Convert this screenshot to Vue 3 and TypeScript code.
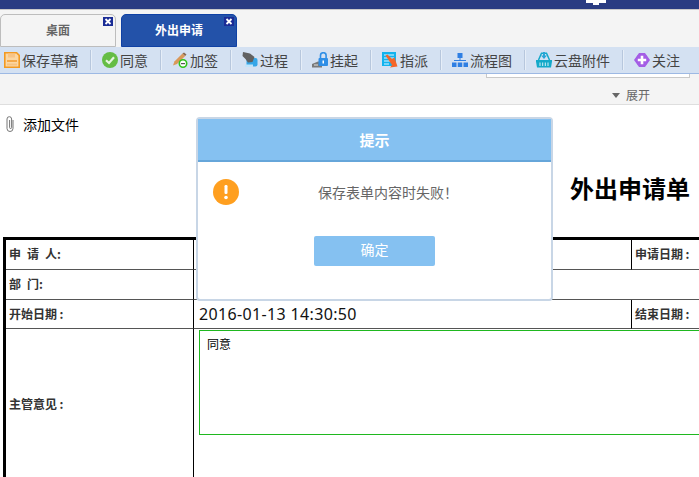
<template>
  <div class="page">
    <div class="topbar">
      <svg width="20" height="5" viewBox="0 0 20 5"><path d="M0 0h20v3h-7v2H7V3H0z" fill="#fff" /></svg>
    </div>

    <div class="tabs">
      <div v-for="tab in tabs" :key="tab.name" class="tab" :class="{ active: tab.active }">
        {{ tab.name }}
        <span class="tab-close">
          <svg width="10" height="9" viewBox="0 0 10 9">
            <path d="M2.5 2 7.5 7M7.5 2 2.5 7" stroke="#fff" stroke-width="1.8" fill="none" />
          </svg>
        </span>
      </div>
    </div>

    <div class="toolbar">
      <template v-for="(item, i) in tools" :key="item.name">
        <span v-if="i > 0" class="sep"></span>
        <div class="tool">
          <svg class="tool-icon" width="16" height="16" viewBox="0 0 16 16">
            <g v-if="item.icon === 'save'">
              <path d="M.8.8h11.8l2.600 2.600v11.800H.8z" fill="#fbd7a4" stroke="#f39a22" stroke-width="1.600" />
              <rect x="4" y="1.500" width="7" height="4" fill="#f8c486" />
              <rect x="3" y="8" width="10" height="2" fill="#f5a94a" />
              <rect x="3" y="11.500" width="10" height="2" fill="#f7c381" />
            </g>
            <g v-else-if="item.icon === 'ok'">
              <circle cx="8" cy="8" r="8" fill="#65bd45" />
              <path d="M4 8.200 7 11 12 5.200" stroke="#e6f5df" stroke-width="2.200" fill="none" />
            </g>
            <g v-else-if="item.icon === 'sign'">
              <path d="M1 13.500 2.400 9.500 10.500 1.500 13.200 4 5 12z" fill="#d9995a" />
              <path d="M10.500 1.500 13.200 4 14.500 2.600 12 .4z" fill="#8a6a50" />
              <circle cx="11" cy="11.500" r="3.700" fill="#fff" stroke="#2fc21a" stroke-width="1.600" />
              <rect x="9" y="11" width="4" height="1.200" fill="#555" />
            </g>
            <g v-else-if="item.icon === 'flow'">
              <rect x="4.500" y="6" width="11" height="8.500" rx="2" fill="#35a6e8" />
              <rect x="3" y="12.500" width="8" height="2.500" fill="#bfe4fa" />
              <path d="M1 0 8 1.500 12.500 5 10.500 10 6 10.500 3.500 7 .5 4z" fill="#616161" />
            </g>
            <g v-else-if="item.icon === 'lock'">
              <path d="M0 15.500v-3.500l6-2.500h4v6z" fill="#7a7a7a" />
              <path d="M2 13h4" stroke="#e3e3e3" stroke-width="1" />
              <rect x="6.500" y="6" width="9.500" height="8" rx="1" fill="#2f8ee6" />
              <path d="M8.500 6.500V3.500a2.800 2.800 0 0 1 5.600 0v3" stroke="#2f8ee6" stroke-width="1.600" fill="none" />
              <rect x="10.500" y="8.500" width="1.500" height="3" fill="#fff" />
            </g>
            <g v-else-if="item.icon === 'assign'">
              <rect x="0" y="0" width="14" height="14" fill="#12b3ee" />
              <path d="M2 3h10M2 6h10M2 9h6M2 12h5" stroke="#dff5ff" stroke-width="1.200" />
              <path d="M3.500 3.500 5.500 2.500 10 7l2.500-1.500L15.500 14.500 8 15.500l2-2.500z" fill="#f4662a" />
            </g>
            <g v-else-if="item.icon === 'chart'" fill="#2f7fe3">
              <rect x="5.500" y="1" width="5" height="5" />
              <rect x="7.500" y="6" width="1" height="2" />
              <rect x="2" y="8" width="12" height="1" />
              <rect x="0" y="10.500" width="4.500" height="4.500" />
              <rect x="5.750" y="10.500" width="4.500" height="4.500" />
              <rect x="11.500" y="10.500" width="4.500" height="4.500" />
            </g>
            <g v-else-if="item.icon === 'cloud'">
              <path d="M2.500 8 5.500 1.200h5L13.500 8" fill="none" stroke="#13a9c9" stroke-width="1.500" />
              <path d="M0 8h16v1.500l-1 6H1l-1-6z" fill="#13a9c9" />
              <path d="M7 0h2v3.500h2L8 7 5 3.500h2z" fill="#2aa5d8" />
              <path d="M4 10.500v3.500M6.700 10.500v3.500M9.300 10.500v3.500M12 10.500v3.500" stroke="#d8f2f8" stroke-width="1" />
            </g>
            <g v-else>
              <path d="M5 1h6l5 7-5 7H5L0 8z" fill="#a45ee5" />
              <circle cx="8" cy="8" r="6.200" fill="#a45ee5" />
              <path d="M8 3.800v8.400M3.800 8h8.400" stroke="#fff" stroke-width="2.600" />
            </g>
          </svg>
          <span>{{ item.name }}</span>
        </div>
      </template>
    </div>

    <div class="subbar">
      <div class="search-edge"></div>
      <div class="expand"><i class="caret"></i>展开</div>
    </div>

    <div class="attach">
      <svg width="8" height="16" viewBox="0 0 8 16">
        <path d="M7 4v8.500a3 3 0 0 1-6 0V3a2.300 2.300 0 0 1 4.600 0v8.500a1 1 0 0 1-2 0V4" fill="none" stroke="#777" stroke-width="1" />
      </svg>
      <span>添加文件</span>
    </div>

    <h1 class="title">外出申请单</h1>

    <table class="form">
      <colgroup>
        <col class="c1" />
        <col class="c2" />
        <col class="c3" />
        <col />
      </colgroup>
      <tbody>
        <tr class="r1">
          <th>申&ensp;请&ensp;人:</th>
          <td></td>
          <th>申请日期&thinsp;:</th>
          <td></td>
        </tr>
        <tr class="r2">
          <th>部&ensp;门:</th>
          <td colspan="3"></td>
        </tr>
        <tr class="r3">
          <th>开始日期&thinsp;:</th>
          <td class="date">2016-01-13 14:30:50</td>
          <th>结束日期&thinsp;:</th>
          <td></td>
        </tr>
        <tr class="r4">
          <th>主管意见&thinsp;:</th>
          <td colspan="3" class="opinion">
            <textarea readonly :value="opinion"></textarea>
          </td>
        </tr>
      </tbody>
    </table>

    <div class="modal">
      <div class="modal-head">提示</div>
      <div class="modal-body">
        <svg class="warn" width="26" height="26" viewBox="0 0 26 26">
          <circle cx="13" cy="13" r="13" fill="#ff9f1f" />
          <rect x="11.500" y="6" width="3" height="9" rx="1.200" fill="#fff" />
          <circle cx="13" cy="18.500" r="1.800" fill="#fff" />
        </svg>
        <p class="msg">{{ message }}</p>
      </div>
      <button class="ok" type="button">确定</button>
    </div>
  </div>
</template>

<script setup lang="ts">
interface Tool {
  name: string;
  icon: string;
}

const tabs = [
  { name: '桌面', active: false },
  { name: '外出申请', active: true },
];

const tools: Tool[] = [
  { name: '保存草稿', icon: 'save' },
  { name: '同意', icon: 'ok' },
  { name: '加签', icon: 'sign' },
  { name: '过程', icon: 'flow' },
  { name: '挂起', icon: 'lock' },
  { name: '指派', icon: 'assign' },
  { name: '流程图', icon: 'chart' },
  { name: '云盘附件', icon: 'cloud' },
  { name: '关注', icon: 'plus' },
];

const opinion = '同意';
const message = '保存表单内容时失败！';
</script>

<style>
html,
body {
  margin: 0;
  background: #fff;
}
</style>

<style scoped>
.page {
  position: relative;
  width: 699px;
  height: 477px;
  overflow: hidden;
  background: #fff;
  color: #000;
  font-family: "Noto Sans CJK SC", "Liberation Sans", sans-serif;
}

.topbar {
  height: 9px;
  background: #2a3c82;
  border-bottom: 1px solid #c9c9c9;
  display: flex;
  justify-content: flex-end;
  padding-right: 93px;
}

.tabs {
  height: 37px;
  box-sizing: border-box;
  padding-top: 4px;
  display: flex;
  gap: 5px;
  background: #f4f4f4;
}
.tab {
  position: relative;
  width: 116px;
  box-sizing: border-box;
  border: 1px solid #bdbdbd;
  border-radius: 5px 5px 0 0;
  font-size: 12px;
  font-weight: 700;
  line-height: 30px;
  text-align: center;
  color: #666;
}
.tab.active {
  background: #2352a9;
  border-color: #0f41a5;
  color: #fff;
}
.tab-close {
  position: absolute;
  top: 2px;
  right: 2px;
  width: 10px;
  height: 9px;
  display: flex;
  background: #1a2c96;
}

.toolbar {
  height: 27px;
  box-sizing: border-box;
  display: flex;
  align-items: center;
  padding-left: 4px;
  background: #d4e1f2;
  border-bottom: 1px solid #9db9e4;
  font-size: 14px;
  color: #444;
}
.tool {
  display: flex;
  align-items: center;
  gap: 2px;
  line-height: 18px;
}
.tool-icon {
  flex: none;
}
.sep {
  width: 1px;
  height: 20px;
  margin: 0 11px 0 12px;
  background: #b7c7dd;
  box-shadow: 1px 0 #e6eef8;
}

.subbar {
  height: 31px;
  box-sizing: border-box;
  display: flex;
  flex-direction: column;
  align-items: flex-end;
  padding-right: 9px;
  background: #f4f4f4;
  border-bottom: 1px solid #dedede;
}
.search-edge {
  width: 204px;
  height: 4px;
  box-sizing: border-box;
  background: #fff;
  border: 1px solid #c9c9c9;
  border-top: 0;
}
.expand {
  margin-top: 9px;
  padding-right: 40px;
  display: flex;
  align-items: center;
  gap: 6px;
  font-size: 12px;
  line-height: 16px;
  color: #666;
}
.caret {
  width: 0;
  height: 0;
  border: 4px solid transparent;
  border-top: 5px solid #666;
  border-bottom: 0;
}

.attach {
  display: flex;
  align-items: center;
  gap: 9px;
  margin-top: 10px;
  padding-left: 6px;
  height: 18px;
  font-size: 14px;
  line-height: 18px;
}

.title {
  margin: 38px 9px 0 0;
  height: 34px;
  font-size: 24px;
  font-weight: 700;
  line-height: 34px;
  text-align: right;
}

.form {
  margin: 32px 0 0 3px;
  width: 760px;
  table-layout: fixed;
  border-collapse: separate;
  border-spacing: 0;
  border-top: 3px solid #000;
  border-left: 3px solid #000;
}
.c1 {
  width: 188px;
}
.c2 {
  width: 438px;
}
.c3 {
  width: 130px;
}
.form th,
.form td {
  padding: 0;
  border-bottom: 1px solid #555;
  border-right: 1px solid #000;
}
.form th {
  padding: 0 0 2px 3px;
  font-size: 12px;
  font-weight: 700;
  text-align: left;
  color: #333;
  white-space: nowrap;
}
.form .r4 th {
  padding-bottom: 0;
}
.r1,
.r2 {
  height: 30px;
}
.r3 {
  height: 29px;
}
.r4 {
  height: 149px;
}
.form .date {
  padding-left: 5px;
  font-family: "Noto Sans", "Liberation Sans", sans-serif;
  font-size: 16px;
  letter-spacing: 0.35px;
  color: #111;
}
.form .opinion {
  padding: 1px 0 0 5px;
  vertical-align: top;
}
.opinion textarea {
  display: block;
  width: 560px;
  height: 105px;
  box-sizing: border-box;
  margin: 0;
  padding: 5px 7px;
  border: 1px solid #1fb81f;
  outline: 0;
  resize: none;
  overflow: hidden;
  font: 12px/15px "Noto Sans CJK SC", sans-serif;
  color: #000;
}

.modal {
  position: absolute;
  left: 196px;
  top: 117px;
  width: 357px;
  height: 184px;
  box-sizing: border-box;
  display: flex;
  flex-direction: column;
  align-items: center;
  background: #fff;
  border: 2px solid #c8d6e6;
  border-radius: 4px;
}
.modal-head {
  align-self: stretch;
  height: 43px;
  box-sizing: border-box;
  background: #85c1f1;
  border-bottom: 2px solid #66a6da;
  font-size: 15px;
  font-weight: 700;
  line-height: 41px;
  text-align: center;
  color: #fff;
}
.modal-body {
  align-self: stretch;
  display: flex;
  align-items: center;
  height: 60px;
  padding-left: 15px;
  box-sizing: border-box;
}
.warn {
  flex: none;
}
.msg {
  flex: 1;
  margin: 0;
  padding-right: 14px;
  font-size: 14px;
  line-height: 20px;
  text-align: center;
  color: #666;
}
.ok {
  width: 121px;
  height: 30px;
  box-sizing: border-box;
  margin-top: 14px;
  padding: 0 0 5px;
  border: 0;
  border-radius: 2px;
  background: #85c1f1;
  font: 14px/20px "Noto Sans CJK SC", sans-serif;
  color: #fff;
}
</style>
